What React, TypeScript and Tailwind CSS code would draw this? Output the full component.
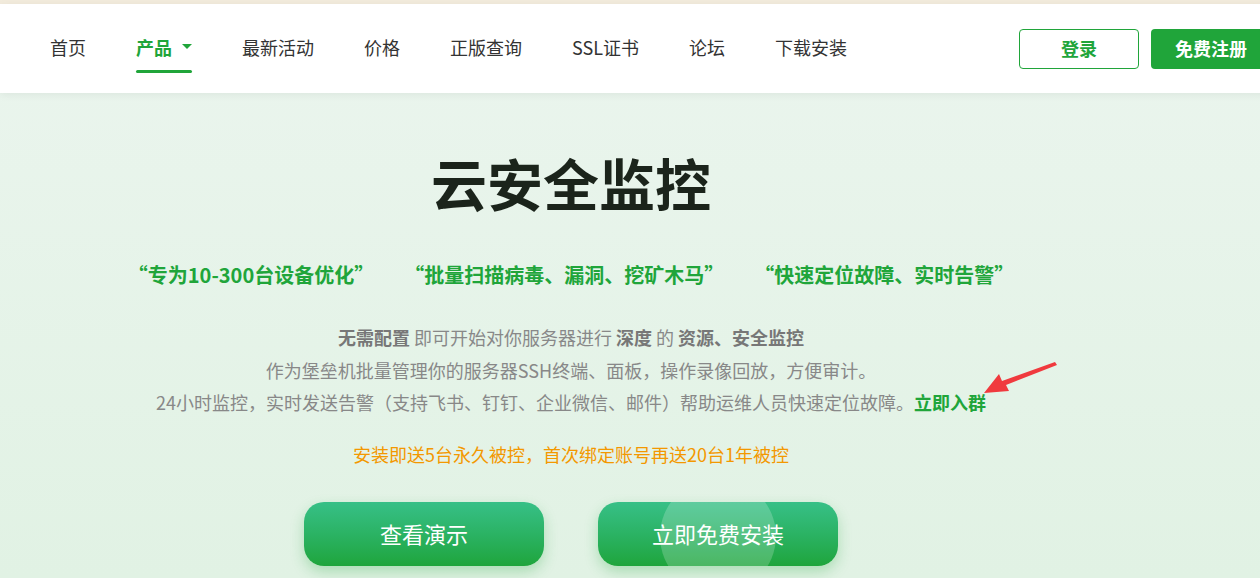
import React from "react";

const navItems = ["首页", "产品", "最新活动", "价格", "正版查询", "SSL证书", "论坛", "下载安装"];

const taglines = ["“专为10-300台设备优化”", "“批量扫描病毒、漏洞、挖矿木马”", "“快速定位故障、实时告警”"];

export default function App() {
  return (
    <div
      className="relative min-h-[578px] w-full overflow-hidden bg-gradient-to-b from-[#ebf5ee] to-[#e1f2e4]"
      style={{ fontFamily: '"Noto Sans CJK SC", "Liberation Sans", sans-serif' }}
    >
      {/* top strip */}
      <div className="h-[4px] bg-[#f2ebdc]" />

      {/* HEADER */}
      <header className="relative z-10 flex h-[89px] w-[1290px] items-center bg-white pl-[50px] pr-[19px] shadow-[0_2px_8px_rgba(0,0,0,0.06)]">
        <nav className="-mt-[4px] flex flex-1 items-center gap-[50px]">
          {navItems.map((item) =>
            item === "产品" ? (
              <div key={item} className="relative flex items-center">
                <span className="text-[18px] font-bold leading-[24px] text-[#20a53a]">{item}</span>
                <span className="ml-[10px] h-0 w-0 border-x-[5px] border-t-[5px] border-x-transparent border-t-[#20a53a]" />
                <span className="absolute left-0 right-0 top-[35px] h-[3px] rounded bg-[#20a53a]" />
              </div>
            ) : (
              <span key={item} className="text-[18px] leading-[24px] text-[#333]">
                {item}
              </span>
            )
          )}
        </nav>

        <div className="flex shrink-0 items-center gap-[12px]">
          <button className="flex h-[40px] w-[120px] items-center justify-center rounded-[4px] border border-[#20a53a] bg-white text-[18px] font-bold text-[#20a53a]">
            登录
          </button>
          <button className="flex h-[40px] w-[120px] items-center justify-center rounded-[4px] bg-[#20a53a] text-[18px] font-bold text-white">
            免费注册
          </button>
        </div>
      </header>

      {/* HERO */}
      <section className="flex w-[1142px] flex-col items-center pt-[61px] text-center">
        <h1 className="text-[56px] font-bold leading-[56px] text-[#1b241b]">云安全监控</h1>

        <div className="mt-[51px] flex gap-[30px]">
          {taglines.map((t) => (
            <span key={t} className="text-[20px] font-bold leading-[28px] text-[#20a53a]">
              {t}
            </span>
          ))}
        </div>

        <div className="mt-[32px] flex flex-col items-center text-[18px] leading-[32.5px] text-[#888]">
          <p>
            <b className="font-bold text-[#777]">无需配置</b> 即可开始对你服务器进行{" "}
            <b className="font-bold text-[#777]">深度</b> 的{" "}
            <b className="font-bold text-[#777]">资源、安全监控</b>
          </p>
          <p>作为堡垒机批量管理你的服务器SSH终端、面板，操作录像回放，方便审计。</p>
          <p>
            24小时监控，实时发送告警（支持飞书、钉钉、企业微信、邮件）帮助运维人员快速定位故障。
            <b className="font-bold text-[#20a53a]">立即入群</b>
          </p>
        </div>

        <p className="mt-[21px] text-[18px] leading-[28px] text-[#f39800]">
          安装即送5台永久被控，首次绑定账号再送20台1年被控
        </p>

        <div className="mt-[34px] flex gap-[54px]">
          <button className="flex h-[64px] w-[240px] items-center justify-center rounded-[20px] bg-gradient-to-b from-[#37c087] to-[#1fa53b] text-[22px] text-white shadow-[0_6px_14px_rgba(32,165,58,0.28)]">
            查看演示
          </button>
          <button className="relative flex h-[64px] w-[240px] items-center justify-center overflow-hidden rounded-[20px] bg-gradient-to-b from-[#37c087] to-[#1fa53b] text-[22px] text-white shadow-[0_6px_14px_rgba(32,165,58,0.28)]">
            <span className="absolute left-[62px] top-[-24px] h-[116px] w-[116px] rounded-full bg-white/20" />
            <span className="relative">立即免费安装</span>
          </button>
        </div>
      </section>

      {/* red arrow annotation */}
      <svg className="absolute left-[980px] top-[358px]" width="82" height="40" viewBox="0 0 82 40">
        <polygon points="75,4 77,7 26,27 29,33 4,35 19,16 22,23" fill="#f03a3e" />
      </svg>
    </div>
  );
}
